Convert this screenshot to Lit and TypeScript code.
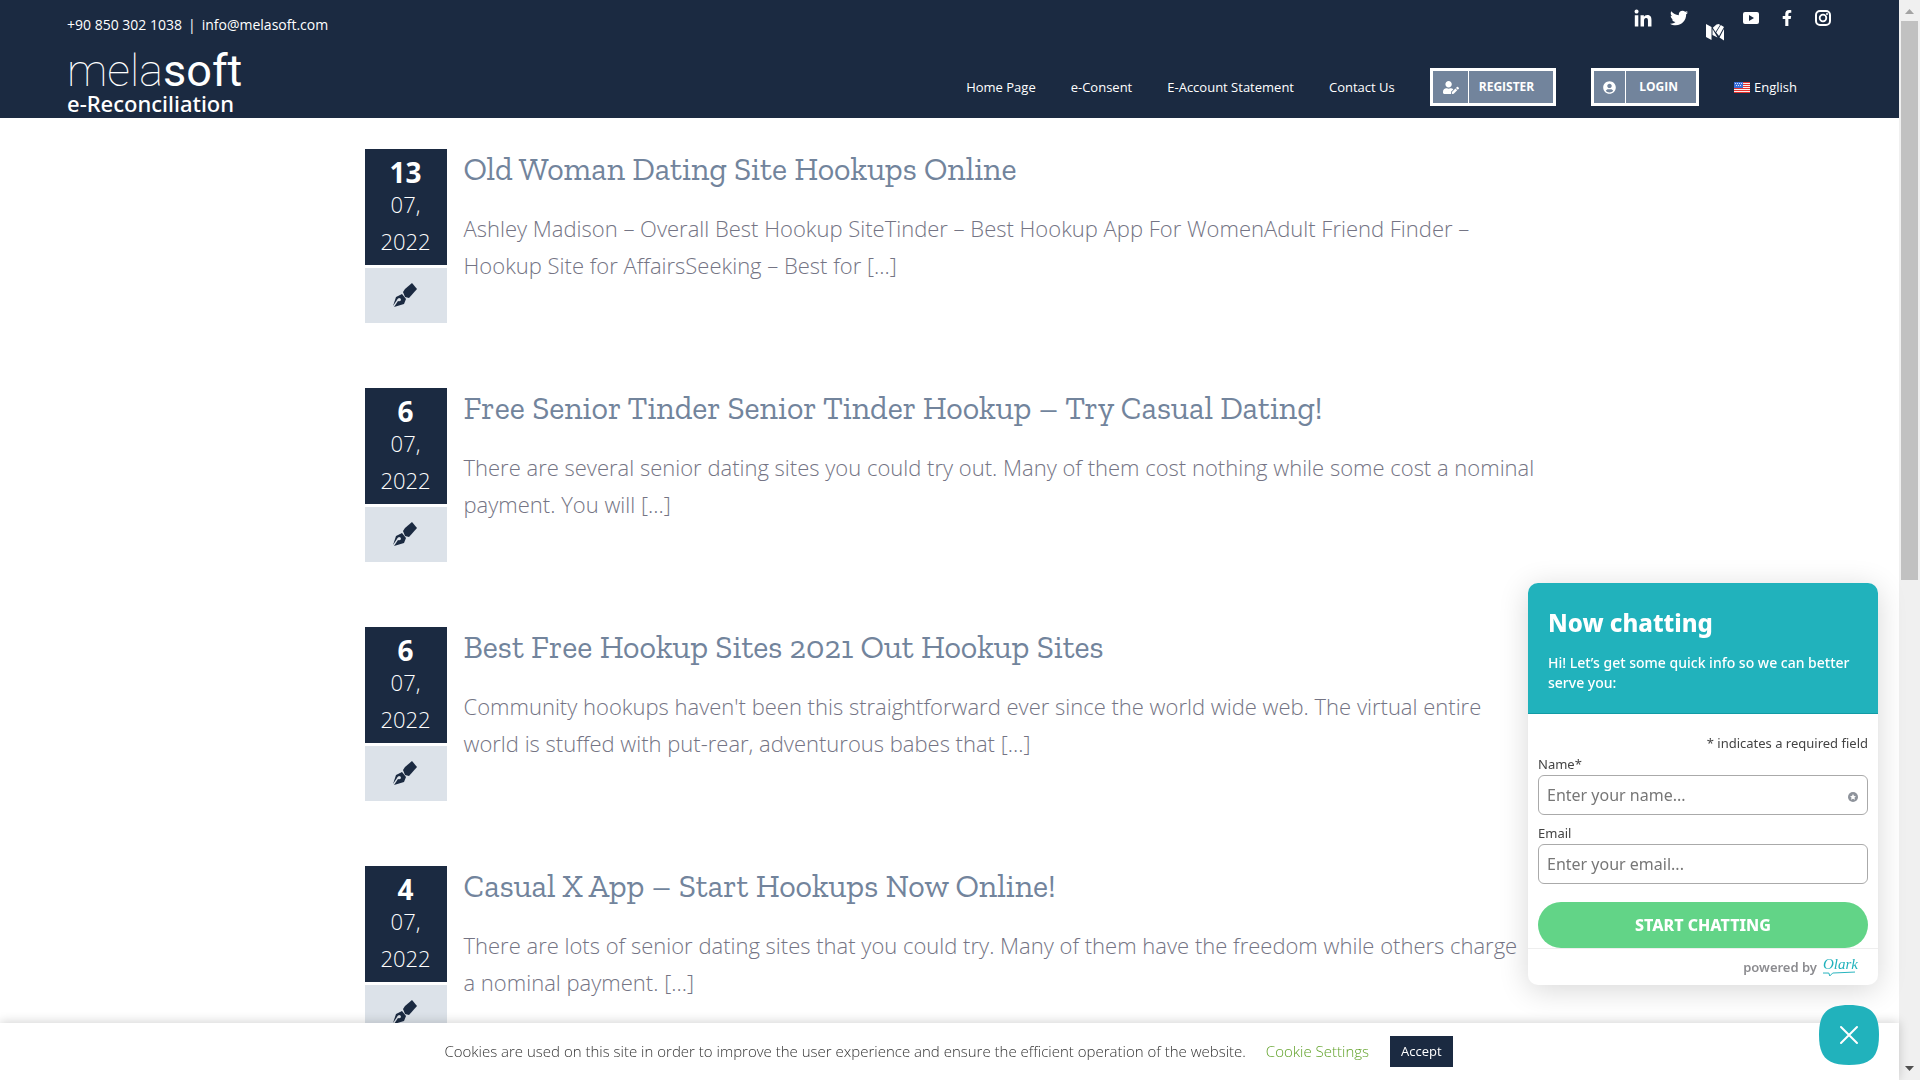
import { LitElement, html, css, svg } from "lit";
import { customElement } from "lit/decorators.js";

interface Post {
  day: string;
  month: string;
  year: string;
  title: string;
  excerpt: string;
}

const posts: Post[] = [
  {
    day: "13", month: "07,", year: "2022",
    title: "Old Woman Dating Site Hookups Online",
    excerpt: "Ashley Madison – Overall Best Hookup SiteTinder – Best Hookup App For WomenAdult Friend Finder – Hookup Site for AffairsSeeking – Best for [...]",
  },
  {
    day: "6", month: "07,", year: "2022",
    title: "Free Senior Tinder Senior Tinder Hookup – Try Casual Dating!",
    excerpt: "There are several senior dating sites you could try out. Many of them cost nothing while some cost a nominal payment. You will [...]",
  },
  {
    day: "6", month: "07,", year: "2022",
    title: "Best Free Hookup Sites 2021 Out Hookup Sites",
    excerpt: "Community hookups haven't been this straightforward ever since the world wide web. The virtual entire world is stuffed with put-rear, adventurous babes that [...]",
  },
  {
    day: "4", month: "07,", year: "2022",
    title: "Casual X App – Start Hookups Now Online!",
    excerpt: "There are lots of senior dating sites that you could try. Many of them have the freedom while others charge a nominal payment. [...]",
  },
];

const social = [
  {
    name: "LinkedIn", box: "-14 -14 476 476",
    art: svg`<path d="M100.28 448H7.4V148.9h92.88zM53.79 108.1C24.09 108.1 0 83.5 0 53.8a53.79 53.79 0 0 1 107.58 0c0 29.7-24.1 54.3-53.79 54.3zM447.9 448h-92.68V302.4c0-34.7-.7-79.2-48.29-79.2-48.29 0-55.69 37.7-55.69 76.7V448h-92.78V148.9h89.08v40.8h1.3c12.4-23.5 42.69-48.3 87.88-48.3 94 0 111.28 61.9 111.28 142.3V448z"/>`,
  },
  {
    name: "Twitter", box: "0 0 512 512",
    art: svg`<path d="M459.37 151.716c.325 4.548.325 9.097.325 13.645 0 138.72-105.583 298.558-298.558 298.558-59.452 0-114.68-17.219-161.137-47.106 8.447.974 16.568 1.299 25.34 1.299 49.055 0 94.213-16.568 130.274-44.832-46.132-.975-84.792-31.188-98.112-72.772 6.498.974 12.995 1.624 19.818 1.624 9.421 0 18.843-1.3 27.614-3.573-48.081-9.747-84.143-51.98-84.143-102.985v-1.299c13.969 7.797 30.214 12.67 47.431 13.319-28.264-18.843-46.781-51.005-46.781-87.391 0-19.492 5.197-37.36 14.294-52.954 51.655 63.675 129.3 105.258 216.365 109.807-1.624-7.797-2.599-15.918-2.599-24.04 0-57.828 46.782-104.934 104.934-104.934 30.213 0 57.502 12.67 76.67 33.137 23.715-4.548 46.456-13.32 66.599-25.34-7.798 24.366-24.366 44.833-46.132 57.827 21.117-2.273 41.584-8.122 60.426-16.243-14.292 20.791-32.161 39.308-52.628 54.253z"/>`,
  },
  {
    name: "Medium", box: "0 0 18 18", low: true,
    art: svg`<path d="M0 1 5.500 4v13L0 14zM6.500 6 11.500 14.500 6.500 12zM6.800 4.800 10.500 1.500 13 1 14 2 9.500 9zM14.800 2 18 4 13 13 10.200 9.500zM18 6v11.500L13.500 14.500z"/>`,
  },
  {
    name: "YouTube", box: "0 0 18 18",
    art: svg`<path fill-rule="evenodd" d="M3 3h12q2 0 2 2v8q0 2-2 2H3q-2 0-2-2V5q0-2 2-2zm4 3v6l5-3z"/>`,
  },
  {
    name: "Facebook", box: "-96 -32 512 576",
    art: svg`<path d="M279.14 288l14.22-92.66h-88.91v-60.13c0-25.35 12.42-50.06 52.24-50.06h40.42V6.26S260.43 0 225.36 0c-73.22 0-121.08 44.38-121.08 124.72v70.62H22.89V288h81.39v224h100.17V288z"/>`,
  },
  {
    name: "Instagram", box: "0 0 18 18",
    art: svg`<rect x="2" y="2" width="14" height="14" rx="4" fill="none" stroke="currentColor" stroke-width="2"/><circle cx="9" cy="9" r="3.3" fill="none" stroke="currentColor" stroke-width="1.8"/><circle cx="13" cy="5" r="1"/>`,
  },
];

@customElement("site-header")
class SiteHeader extends LitElement {
  static styles = css`
    :host { display: block; background: #1b2a41; color: #fff; font-family: "Open Sans", sans-serif; }
    a { color: inherit; text-decoration: none; }
    svg { display: block; fill: currentColor; }
    .bar { display: flex; justify-content: space-between; height: 118px; box-sizing: border-box; padding: 9px 67px 0; }
    .left, .right { display: flex; flex-direction: column; }
    .contact { display: flex; gap: 6px; margin: 0; padding-top: 6px; font-size: 14px; line-height: 20px; }
    .logo { display: flex; flex-direction: column; padding-top: 12px; }
    .word { font-family: Roboto, sans-serif; font-size: 45px; font-weight: 100; line-height: 48px; }
    .word b { font-weight: 400; }
    .sub { font-family: "Noto Sans", sans-serif; font-size: 22px; font-weight: 500; line-height: 24px; margin-top: -4px; }
    .right { align-items: flex-end; }
    .social { display: flex; gap: 18px; height: 32px; }
    .social svg { width: 18px; height: 18px; }
    .social a { height: 18px; }
    .social .low { align-self: flex-end; }
    .nav { display: flex; align-items: center; gap: 35px; margin: 27px 35px 0 0; font-size: 13px; line-height: 20px; }
    .cta { display: flex; border: 3px solid #fff; background: #72849c; height: 32px; font-weight: 700; font-size: 12px; }
    .cta svg { height: 13px; width: 13px; }
    .cta-icon { display: flex; align-items: center; padding: 0 9px; border-right: 1px solid #fff; }
    .cta-wide svg { width: 16px; }
    .cta-wide .cta-icon { padding: 0 9px 0 10px; }
    .cta-text { display: flex; align-items: center; padding: 0 18px 0 13px; }
    .cta-wide .cta-text { padding: 0 19px 0 10px; }
    .lang { display: flex; align-items: center; gap: 4px; }
    .lang svg { width: 16px; height: 11px; }
  `;
  render() {
    return html`
      <header class="bar">
        <div class="left">
          <p class="contact"><a href="#">+90 850 302 1038</a><span>|</span><a href="#">info@melasoft.com</a></p>
          <a class="logo" href="#"><span class="word">mela<b>soft</b></span><span class="sub">e-Reconciliation</span></a>
        </div>
        <div class="right">
          <div class="social">
            ${social.map((s) => html`<a class=${s.low ? "low" : ""} href="#" aria-label=${s.name}><svg viewBox=${s.box}>${s.art}</svg></a>`)}
          </div>
          <nav class="nav">
            <a href="#">Home Page</a><a href="#">e-Consent</a><a href="#">E-Account Statement</a><a href="#">Contact Us</a>
            <a class="cta cta-wide" href="#"><span class="cta-icon"><svg viewBox="0 0 640 512"><path d="M224 256c70.7 0 128-57.3 128-128S294.7 0 224 0 96 57.3 96 128s57.3 128 128 128zm89.6 32h-16.7c-22.2 10.2-46.9 16-72.9 16s-50.6-5.8-72.9-16h-16.7C60.2 288 0 348.2 0 422.4V464c0 26.5 21.5 48 48 48h274.9c-2.4-6.8-3.4-14-2.6-21.3l6.8-60.9 1.2-11.1 7.9-7.9 77.3-77.3c-24.5-27.7-60-45.5-99.9-45.5zm45.3 145.3l-6.8 61c-1.1 10.2 7.5 18.8 17.6 17.6l60.9-6.8 137.9-137.9-71.7-71.7-137.9 137.8zM633 268.9L595.1 231c-9.3-9.3-24.5-9.3-33.8 0l-37.8 37.8-4.1 4.1 71.8 71.7 41.8-41.8c9.3-9.4 9.3-24.5 0-33.9z"/></svg></span><span class="cta-text">REGISTER</span></a>
            <a class="cta" href="#"><span class="cta-icon"><svg viewBox="0 0 496 512"><path d="M248 8C111 8 0 119 0 256s111 248 248 248 248-111 248-248S385 8 248 8zm0 96c48.6 0 88 39.4 88 88s-39.4 88-88 88-88-39.4-88-88 39.4-88 88-88zm0 344c-58.7 0-111.3-26.6-146.5-68.2 18.8-35.4 55.6-59.8 98.5-59.8 2.4 0 4.8.4 7.1 1.1 13 4.2 26.6 6.9 40.9 6.9 14.3 0 28-2.7 40.9-6.9 2.3-.7 4.7-1.1 7.1-1.1 42.9 0 79.7 24.4 98.5 59.8C359.3 421.4 306.7 448 248 448z"/></svg></span><span class="cta-text">LOGIN</span></a>
            <a class="lang" href="#"><svg viewBox="0 0 16 11"><path fill="#f8f0f0" d="M0 0h16v11H0z"/><path fill="#e3342f" d="M0 0h16v1H0zM0 2h16v1H0zM0 4h16v1H0zM0 6h16v1H0zM0 8h16v1H0zM0 10h16v1H0z"/><path fill="#3c6fd8" d="M0 0h9v6H0z"/><path fill="#cfe0ff" d="M1 1h1v1H1zM3 1h1v1H3zM5 1h1v1H5zM7 1h1v1H7zM2 3h1v1H2zM4 3h1v1H4zM6 3h1v1H6z"/></svg>English</a>
          </nav>
        </div>
      </header>`;
  }
}

@customElement("blog-list")
class BlogList extends LitElement {
  static styles = css`
    :host { display: block; font-family: "Open Sans", sans-serif; }
    .list { max-width: 1170px; margin: 0 auto; padding-top: 31px; display: grid; gap: 64px; }
    .post { display: grid; grid-template-columns: 82px 1fr; column-gap: 17px; align-items: start; min-height: 175px; }
    .side { display: grid; gap: 3px; text-align: center; }
    .date { background: #1b2a41; color: #fff; padding: 7px 0 3px; height: 106px; font-size: 22px; font-weight: 300; line-height: 37px; }
    .date span { display: block; }
    .date .day { font-size: 28px; font-weight: 700; line-height: 32px; margin-bottom: -2px; }
    .kind { background: #dce2e9; box-sizing: border-box; height: 55px; padding: 0 2px 2px 0; display: grid; place-items: center; }
    .kind svg { width: 24px; height: 24px; fill: #1b2a41; }
    .title { margin: 0 0 21px; font-family: "Zilla Slab", "DejaVu Serif", serif; font-size: 32px; font-weight: 400; line-height: 40px; }
    .title a { color: #72849c; text-decoration: none; }
    .excerpt { margin: 0; font-size: 22px; font-weight: 300; line-height: 37px; color: #747484; }
  `;
  render() {
    return html`<main class="list">
      ${posts.map((p) => html`
        <article class="post">
          <div class="side">
            <div class="date"><span class="day">${p.day}</span><span>${p.month}</span><span>${p.year}</span></div>
            <div class="kind"><svg viewBox="0 0 24 24"><path d="M19 0 24 6 16 15 12 14 10 9 12 6z"/><path fill-rule="evenodd" d="M9 11 13 16 11 21 1 24 5 18Q7 19 8 17 8 15 6 15 4 16 4 17L0 23 3 14z"/></svg></div>
          </div>
          <div>
            <h2 class="title"><a href="#">${p.title}</a></h2>
            <p class="excerpt">${p.excerpt}</p>
          </div>
        </article>`)}
    </main>`;
  }
}

@customElement("cookie-bar")
class CookieBar extends LitElement {
  static styles = css`
    :host { display: block; font-family: "Open Sans", sans-serif; }
    .bar { display: flex; justify-content: center; align-items: center; height: 57px; padding-right: 2px; background: #fff; box-shadow: 0 -1px 10px rgba(0, 0, 0, 0.18); font-size: 15px; font-weight: 300; color: #333; }
    .bar span, .settings { padding-bottom: 2px; }
    .settings { margin: 0 21px 0 20px; color: #61a229; text-decoration: none; }
    .accept { border: 0; background: #1b2a41; color: #fff; font: 400 13px/19px "Open Sans", sans-serif; padding: 6px 11px; }
  `;
  render() {
    return html`<div class="bar">
      <span>Cookies are used on this site in order to improve the user experience and ensure the efficient operation of the website.</span>
      <a class="settings" href="#">Cookie Settings</a>
      <button class="accept">Accept</button>
    </div>`;
  }
}

@customElement("chat-box")
class ChatBox extends LitElement {
  static styles = css`
    :host { display: flex; flex-direction: column; align-items: flex-end; gap: 20px; width: 351px; font-family: "Noto Sans", sans-serif; }
    .panel { width: 350px; margin-right: 1px; border-radius: 10px; overflow: hidden; background: #fff; box-shadow: 0 5px 30px rgba(0, 0, 0, 0.16); }
    .head { background: #21b2bc; border-bottom: 1px solid #129ba5; color: #fff; padding: 22px 20px 20px; height: 88px; }
    .title { margin: 0 0 13px; font-size: 24px; line-height: 35px; font-weight: 800; }
    .intro { margin: 0; font-size: 14px; line-height: 20px; font-weight: 500; }
    .form { padding: 19px 10px 0; display: flex; flex-direction: column; color: #444; font-size: 13px; line-height: 20px; }
    .note { margin: 0 0 1px; text-align: right; }
    .field { position: relative; display: block; margin-bottom: 8px; }
    .email { margin-bottom: 18px; }
    label { display: block; line-height: 21px; }
    input { display: block; box-sizing: border-box; width: 100%; height: 40px; border: 1px solid #aaa; border-radius: 6px; padding: 0 8px; font: 16px "Noto Sans", sans-serif; color: #444; background: #fff; }
    input::placeholder { color: #777; opacity: 1; }
    .badge { position: absolute; right: 10px; bottom: 13px; width: 10px; height: 10px; }
    .start { border: 0; border-radius: 23px; height: 46px; background: #62d487; color: #fff; font: 800 16px "Noto Sans", sans-serif; }
    .foot { border-top: 1px solid #eee; height: 36px; display: flex; justify-content: flex-end; align-items: center; gap: 6px; padding-right: 20px; font-size: 13px; font-weight: 600; color: #8c8c90; }
    .olark { text-decoration: none; color: #21b2bc; font: italic 400 15px/13px "Liberation Serif", serif; display: block; }
    .olark svg { display: block; width: 32px; height: 6px; fill: none; stroke: currentColor; }
    .close { border: 0; padding: 0; background: none; width: 60px; height: 60px; }
    .close svg { display: block; width: 60px; height: 60px; }
  `;
  render() {
    return html`
      <section class="panel">
        <div class="head">
          <h2 class="title">Now chatting</h2>
          <p class="intro">Hi! Let’s get some quick info so we can better serve you:</p>
        </div>
        <div class="form">
          <p class="note">* indicates a required field</p>
          <div class="field">
            <label for="name">Name*</label>
            <input id="name" type="text" placeholder="Enter your name..." />
            <svg class="badge" viewBox="0 0 10 10"><circle cx="5" cy="5" r="5" fill="#8e939b"/><path d="M5 2l1 2 2 .2-1.500 1.400.4 2.100L5 6.800 3.100 7.700l.4-2.100L2 4.200 4 4z" fill="#fff"/></svg>
          </div>
          <div class="field email">
            <label for="email">Email</label>
            <input id="email" type="email" placeholder="Enter your email..." />
          </div>
          <button class="start">START CHATTING</button>
        </div>
        <div class="foot">powered by <a class="olark" href="#">Olark<svg viewBox="0 0 33 6"><path d="M0 2h6l1 3 3-3L33 1"/></svg></a></div>
      </section>
      <button class="close" aria-label="Close chat"><svg viewBox="0 0 60 60"><path fill="#21b2bc" d="M30 0C52 0 60 8 60 30S52 60 30 60 0 52 0 30 8 0 30 0z"/><path d="M22 22 38 38M38 22 22 38" stroke="#fff" stroke-width="2" stroke-linecap="round"/></svg></button>`;
  }
}

@customElement("app-root")
class AppRoot extends LitElement {
  static styles = css`
    :host { display: grid; grid-template-columns: 1fr 21px; height: 100vh; overflow: hidden; background: #fff; }
    .page { overflow: hidden; min-height: 0; }
    .track { background: #f0f0f0; display: flex; flex-direction: column; align-items: center; }
    .track svg { display: block; width: 9px; flex: none; }
    .up { height: 21px; fill: #a3a3a3; }
    .down { height: 24px; fill: #505050; }
    .thumb { width: 17px; flex: 559; background: #c1c1c1; }
    .rest { flex: 476; }
    cookie-bar { position: fixed; left: 0; right: 21px; bottom: 0; }
    chat-box { position: fixed; right: 41px; bottom: 15px; }
  `;
  render() {
    return html`
      <div class="page">
        <site-header></site-header>
        <blog-list></blog-list>
      </div>
      <div class="track">
        <svg class="up" viewBox="0 0 9 21"><path d="M0 14h9L4.500 9z"/></svg>
        <div class="thumb"></div>
        <div class="rest"></div>
        <svg class="down" viewBox="0 0 9 24"><path d="M0 10h9L4.500 15z"/></svg>
      </div>
      <cookie-bar></cookie-bar>
      <chat-box></chat-box>`;
  }
}
